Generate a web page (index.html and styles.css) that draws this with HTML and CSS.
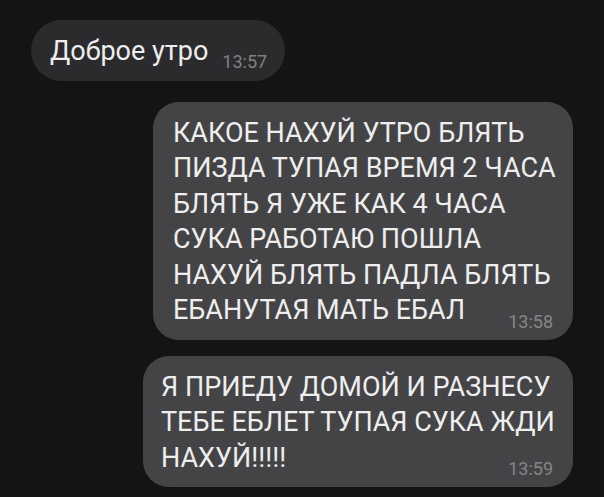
FILE: index.html
```html
<!DOCTYPE html>
<html lang="ru">
<head>
    <meta charset="UTF-8">
    <meta name="viewport" content="width=device-width, initial-scale=1.0">
    <title>Чат</title>
    <link rel="stylesheet" href="styles.css">
</head>
<body>
    <div class="chat">
        <div class="msg incoming">
            <span class="msg-text">Доброе утро</span>
            <span class="msg-time">13:57</span>
        </div>

        <div class="msg outgoing first">
            <div class="msg-text">
                КАКОЕ НАХУЙ УТРО БЛЯТЬ<br>
                ПИЗДА ТУПАЯ ВРЕМЯ 2 ЧАСА<br>
                БЛЯТЬ Я УЖЕ КАК 4 ЧАСА<br>
                СУКА РАБОТАЮ ПОШЛА<br>
                НАХУЙ БЛЯТЬ ПАДЛА БЛЯТЬ<br>
                ЕБАНУТАЯ МАТЬ ЕБАЛ
            </div>
            <div class="msg-time">13:58</div>
        </div>

        <div class="msg outgoing second">
            <div class="msg-text">
                Я ПРИЕДУ ДОМОЙ И РАЗНЕСУ<br>
                ТЕБЕ ЕБЛЕТ ТУПАЯ СУКА ЖДИ<br>
                НАХУЙ!!!!!
            </div>
            <div class="msg-time">13:59</div>
        </div>
    </div>
</body>
</html>
```

FILE: styles.css
```css
body {
    margin: 0;
    background-color: #141414;
    font-family: Roboto, "Noto Sans", sans-serif;
    color: #eeeeee;
}

.chat {
    display: flex;
    flex-direction: column;
    padding: 20px 31px;
}

.msg {
    box-sizing: border-box;
}

.msg-text {
    font-size: 27px;
    line-height: 35.5px;
    white-space: nowrap;
}

.msg-time {
    font-size: 18px;
    line-height: 20px;
    color: #808080;
}

.msg.incoming {
    align-self: flex-start;
    display: flex;
    align-items: flex-end;
    gap: 14px;
    padding: 14px 18px 11px 19px;
    border-radius: 31px;
    background-color: #2b2b2d;
}

.msg.incoming .msg-time {
    margin-bottom: -2px;
}

.msg.outgoing {
    align-self: flex-end;
    padding: 14px 20px 8px 20px;
    border-radius: 26px;
    background-color: #444446;
}

.msg.outgoing .msg-time {
    margin-top: -17px;
    text-align: right;
    color: #858585;
}

.msg.first {
    width: 420px;
    margin-top: 21px;
}

.msg.second {
    width: 430px;
    margin-top: 16px;
    padding-left: 18px;
}
```
